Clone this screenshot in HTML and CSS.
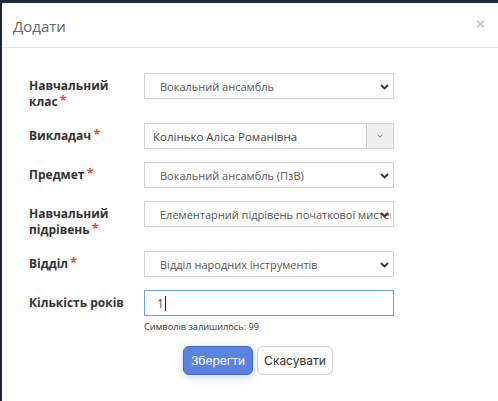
FILE: index.html
```html
<!DOCTYPE html>
<html lang="uk">
<head>
<meta charset="utf-8">
<title>Додати</title>
<link rel="stylesheet" href="styles.css">
</head>
<body>
<div class="backdrop-strip"></div>
<div class="modal">
  <div class="modal-header">
    <h4 class="modal-title">Додати</h4>
    <span class="close">×</span>
  </div>
  <div class="modal-body">
    <div class="form-row">
      <label class="form-label">Навчальний клас<span class="req">*</span></label>
      <div class="control select">
        <span class="select-text">Вокальний ансамбль</span>
        <svg class="chev" width="9" height="6" viewBox="0 0 9 6"><path d="M1 1 L4.5 4.5 L8 1" fill="none" stroke="#333" stroke-width="1.8"/></svg>
      </div>
    </div>
    <div class="form-row">
      <label class="form-label">Викладач<span class="req">*</span></label>
      <div class="control select select-addon">
        <span class="select-text addon-text">Колінько Аліса Романівна</span>
        <span class="addon">
          <svg width="6" height="4" viewBox="0 0 6 4"><path d="M0.5 0.7 L3 3.2 L5.5 0.7" fill="none" stroke="#777" stroke-width="1"/></svg>
        </span>
      </div>
    </div>
    <div class="form-row">
      <label class="form-label">Предмет<span class="req">*</span></label>
      <div class="control select">
        <span class="select-text">Вокальний ансамбль (ПзВ)</span>
        <svg class="chev" width="9" height="6" viewBox="0 0 9 6"><path d="M1 1 L4.5 4.5 L8 1" fill="none" stroke="#333" stroke-width="1.8"/></svg>
      </div>
    </div>
    <div class="form-row">
      <label class="form-label">Навчальний підрівень<span class="req">*</span></label>
      <div class="control select">
        <span class="select-text clip">Елементарний підрівень початкової мистецької освіти</span>
        <svg class="chev" width="9" height="6" viewBox="0 0 9 6"><path d="M1 1 L4.5 4.5 L8 1" fill="none" stroke="#333" stroke-width="1.8"/></svg>
      </div>
    </div>
    <div class="form-row">
      <label class="form-label">Відділ<span class="req">*</span></label>
      <div class="control select">
        <span class="select-text">Відділ народних інструментів</span>
        <svg class="chev" width="9" height="6" viewBox="0 0 9 6"><path d="M1 1 L4.5 4.5 L8 1" fill="none" stroke="#333" stroke-width="1.8"/></svg>
      </div>
    </div>
    <div class="form-row last">
      <label class="form-label">Кількість років</label>
      <div class="control-col">
        <div class="control input focused"><span class="input-text">1</span><span class="caret"></span></div>
        <div class="help">Символів залишилось: 99</div>
      </div>
    </div>
    <div class="actions">
      <button class="btn btn-primary">Зберегти</button>
      <button class="btn btn-default">Скасувати</button>
    </div>
  </div>
</div>
</body>
</html>
```

FILE: styles.css
```css
* { box-sizing: border-box; }
html, body { margin: 0; padding: 0; }
body {
  background: #1d2330;
  font-family: "Open Sans", "Noto Sans", sans-serif;
  color: #333;
  height: 401px;
  overflow: hidden;
}
.backdrop-strip { height: 3px; background: #222a36; }
.modal {
  margin-left: 2px;
  background: #fff;
  min-height: 398px;
}
.modal-header {
  height: 45px;
  border-bottom: 1px solid #e5e5e5;
  display: flex;
  align-items: center;
  justify-content: space-between;
  padding: 0 12px 0 11px;
}
.modal-title {
  margin: 0;
  font-weight: normal;
  font-size: 15px;
  color: #666;
  padding-top: 2px;
}
.close {
  font-family: "DejaVu Sans", sans-serif;
  font-weight: bold;
  font-size: 13px;
  color: #c4c4c4;
  margin-top: -4px;
}
.modal-body {
  padding: 25px 0 0 27px;
}
.form-row {
  display: flex;
  align-items: flex-start;
  margin-bottom: 13px;
}
.form-row.last { margin-bottom: 0; }
.form-label {
  width: 115px;
  padding: 5px 11px 0 0;
  font-size: 12px;
  font-weight: bold;
  line-height: 16px;
  color: #333;
}
.req {
  color: #e5502f;
  font-size: 13px;
  line-height: 1;
  margin-left: 2px;
  position: relative;
  top: -1px;
}
.control {
  width: 250px;
  height: 26px;
  border: 1px solid #d2d2d2;
  display: flex;
  align-items: center;
  font-size: 11px;
  color: #555;
  background: #fff;
}
.select { padding: 0 4px 0 15px; }
.select-text {
  flex: 1;
  min-width: 0;
  white-space: nowrap;
  overflow: hidden;
}
.select-text.clip { margin-right: -11px; }
.chev { flex: none; position: relative; z-index: 1; margin-top: 1px; }
.select-addon { padding: 0 0 0 8px; }
.addon-text { color: #444; font-size: 11.5px; }
.addon {
  width: 27px;
  align-self: stretch;
  background: #eee;
  border-left: 1px solid #d2d2d2;
  display: flex;
  align-items: center;
  justify-content: center;
}
.control-col { display: flex; flex-direction: column; }
.input {
  padding-left: 12px;
  border-color: #6aa6da;
  color: #555;
  font-size: 12px;
}
.caret {
  display: inline-block;
  width: 1px;
  height: 15px;
  background: #222;
  margin-left: 1px;
}
.help {
  margin-top: 4px;
  font-size: 9.2px;
  line-height: 13px;
  color: #333;
}
.actions {
  display: flex;
  gap: 4px;
  margin: 13px 0 0 154px;
}
.btn {
  height: 29px;
  border-radius: 6px;
  font-family: Inter, Roboto, sans-serif;
  font-size: 12px;
  padding: 0;
  cursor: pointer;
}
.btn-primary {
  width: 70px;
  background: #5b82de;
  border: 1px solid #3f68bf;
  color: #fff;
  box-shadow: 0 2px 8px rgba(91, 130, 222, 0.35);
}
.btn-default {
  width: 76px;
  background: #fff;
  border: 1px solid #cfcfcf;
  color: #333;
}
```
